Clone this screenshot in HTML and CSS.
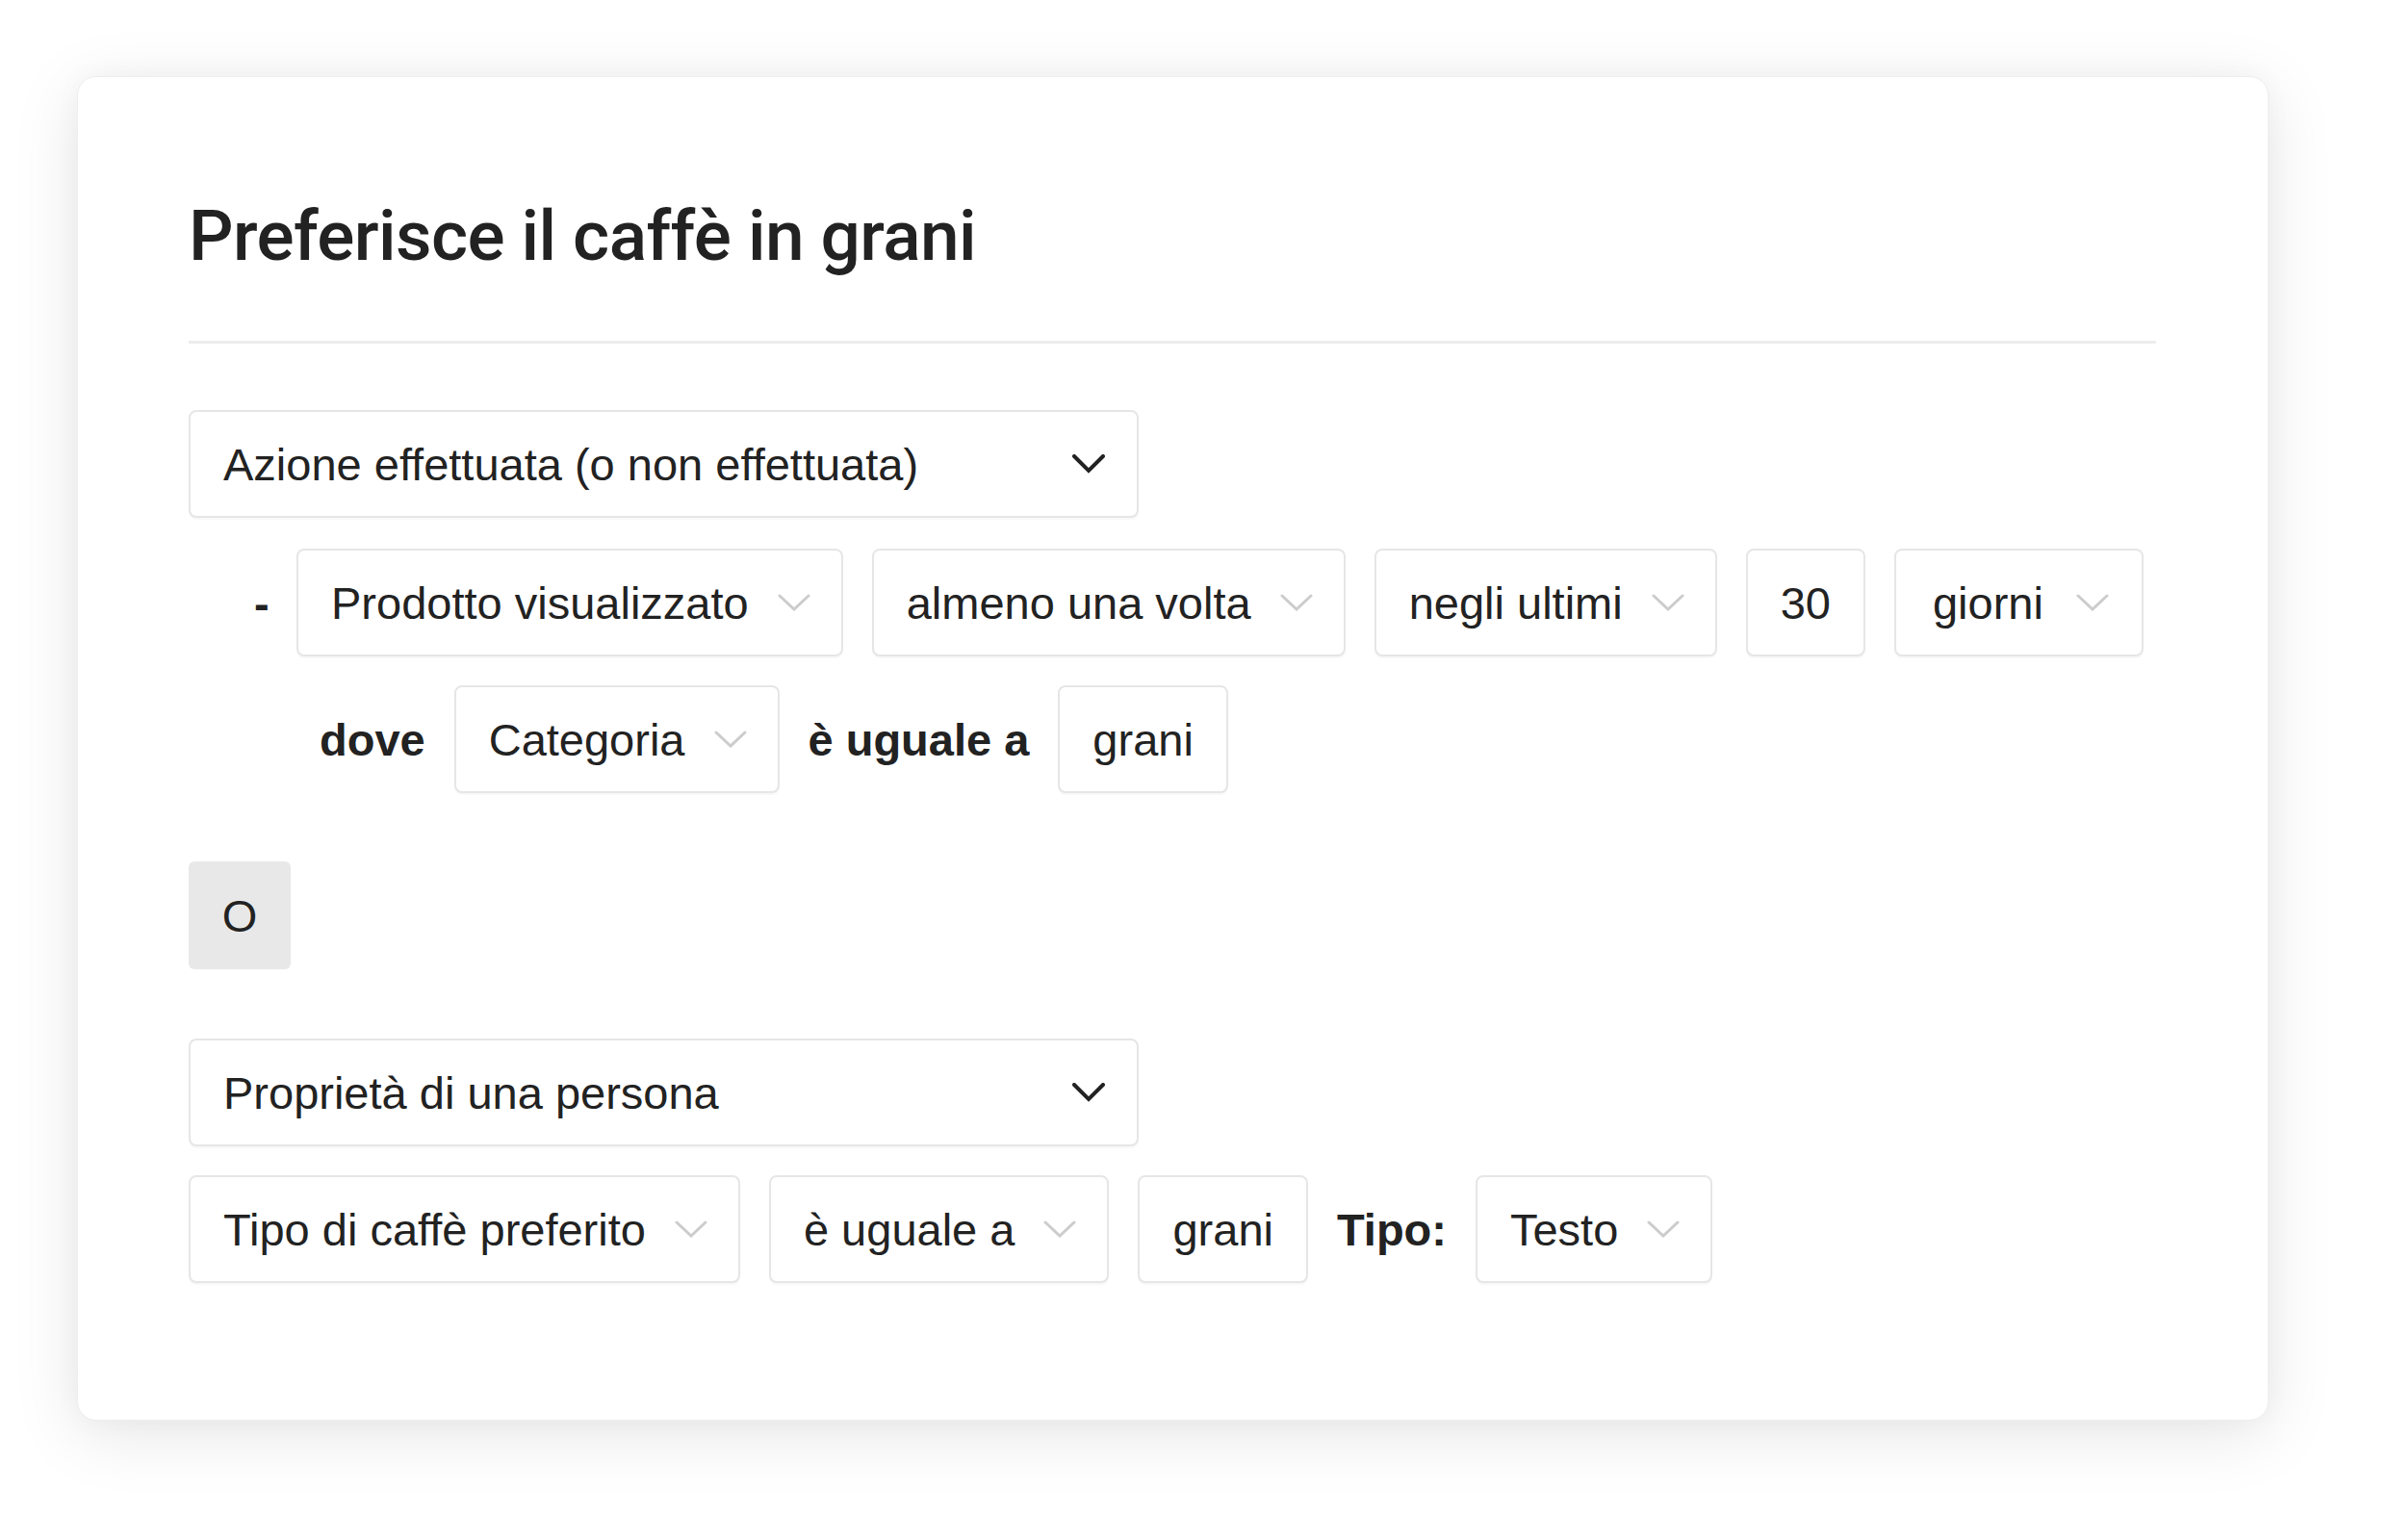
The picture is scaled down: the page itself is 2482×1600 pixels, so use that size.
FILE: index.html
```html
<!DOCTYPE html>
<html lang="it">
<head>
<meta charset="utf-8">
<title>Preferisce il caffè in grani</title>
<link rel="stylesheet" href="styles.css">
</head>
<body>
<div class="card">
  <h1 class="title">Preferisce il caffè in grani</h1>
  <div class="divider"></div>

  <div class="row">
    <div class="box big">
      <span>Azione effettuata (o non effettuata)</span>
      <svg class="chev dark" viewBox="0 0 34 20"><path d="M2 2 L17 17 L32 2"/></svg>
    </div>
  </div>

  <div class="row sub1">
    <span class="dash">-</span>
    <div class="box sel"><span>Prodotto visualizzato</span><svg class="chev light" viewBox="0 0 34 18"><path d="M2 2 L17 16 L32 2"/></svg></div>
    <div class="box sel"><span>almeno una volta</span><svg class="chev light" viewBox="0 0 34 18"><path d="M2 2 L17 16 L32 2"/></svg></div>
    <div class="box sel"><span>negli ultimi</span><svg class="chev light" viewBox="0 0 34 18"><path d="M2 2 L17 16 L32 2"/></svg></div>
    <div class="box val">30</div>
    <div class="box sel wide"><span>giorni</span><svg class="chev light" viewBox="0 0 34 18"><path d="M2 2 L17 16 L32 2"/></svg></div>
  </div>

  <div class="row sub2">
    <span class="label">dove</span>
    <div class="box sel"><span>Categoria</span><svg class="chev light" viewBox="0 0 34 18"><path d="M2 2 L17 16 L32 2"/></svg></div>
    <span class="label">è uguale a</span>
    <div class="box val">grani</div>
  </div>

  <div class="row or-row">
    <div class="or">O</div>
  </div>

  <div class="row prop">
    <div class="box big">
      <span>Proprietà di una persona</span>
      <svg class="chev dark" viewBox="0 0 34 20"><path d="M2 2 L17 17 L32 2"/></svg>
    </div>
  </div>

  <div class="row sub1b">
    <div class="box sel"><span>Tipo di caffè preferito</span><svg class="chev light" viewBox="0 0 34 18"><path d="M2 2 L17 16 L32 2"/></svg></div>
    <div class="box sel"><span>è uguale a</span><svg class="chev light" viewBox="0 0 34 18"><path d="M2 2 L17 16 L32 2"/></svg></div>
    <div class="box val">grani</div>
    <span class="label">Tipo:</span>
    <div class="box sel"><span>Testo</span><svg class="chev light" viewBox="0 0 34 18"><path d="M2 2 L17 16 L32 2"/></svg></div>
  </div>
</div>
</body>
</html>
```
FILE: styles.css
```css
html, body {
  margin: 0;
  padding: 0;
  background: #ffffff;
}

body {
  font-family: "Liberation Sans", Arial, sans-serif;
  color: #222222;
  padding: 79px 0 126px 80px;
  min-height: 1600px;
  box-sizing: border-box;
}

.card {
  box-sizing: border-box;
  width: 2277px;
  background: #ffffff;
  border: 1px solid #eeeeee;
  border-radius: 20px;
  box-shadow: 0 14px 70px rgba(0, 0, 0, 0.10), 0 0 30px rgba(0, 0, 0, 0.03);
  padding: 125px 116px 142px 115px;
}

.title {
  margin: 0;
  font-family: Roboto, "Liberation Sans", sans-serif;
  font-weight: 500;
  font-size: 73px;
  line-height: 80px;
  color: #222222;
  letter-spacing: -0.6px;
}

.divider {
  height: 3px;
  background: #ececec;
  margin-top: 69px;
}

.row {
  display: flex;
  align-items: center;
  gap: 30px;
  margin-top: 30px;
  font-size: 47px;
}

.divider + .row { margin-top: 69px; }

.sub1 { margin-top: 32px; padding-left: 68px; gap: 28px; }
.sub1 .box + .box { margin-left: 2px; }
.sub2 { padding-left: 136px; }
.or-row { margin-top: 71px; }
.prop { margin-top: 72px; }

.box {
  box-sizing: border-box;
  height: 112px;
  display: flex;
  align-items: center;
  border: 2px solid #e6e6e6;
  border-radius: 8px;
  background: #ffffff;
  box-shadow: 0 2px 1px rgba(0, 0, 0, 0.03);
  white-space: nowrap;
}

.big {
  width: 987px;
  justify-content: space-between;
  padding: 0 33px 0 34px;
}

.sel {
  padding: 0 32px 0 34px;
  gap: 30px;
}

.sel.wide {
  padding: 0 34px 0 38px;
  gap: 34px;
}

.val {
  padding: 0 34px;
}

.chev {
  display: block;
  fill: none;
  stroke-linejoin: miter;
  stroke-linecap: round;
}

.chev.dark {
  width: 34px;
  height: 20px;
  stroke: #222222;
  stroke-width: 4;
}

.chev.light {
  width: 34px;
  height: 18px;
  stroke: #cccccc;
  stroke-width: 3;
}

.dash {
  font-weight: 700;
  width: 16px;
}

.label {
  font-weight: 700;
  white-space: nowrap;
}

.or {
  box-sizing: border-box;
  width: 106px;
  height: 112px;
  display: flex;
  align-items: center;
  justify-content: center;
  background: #e8e8e8;
  border-radius: 6px;
  font-size: 47px;
}
```
